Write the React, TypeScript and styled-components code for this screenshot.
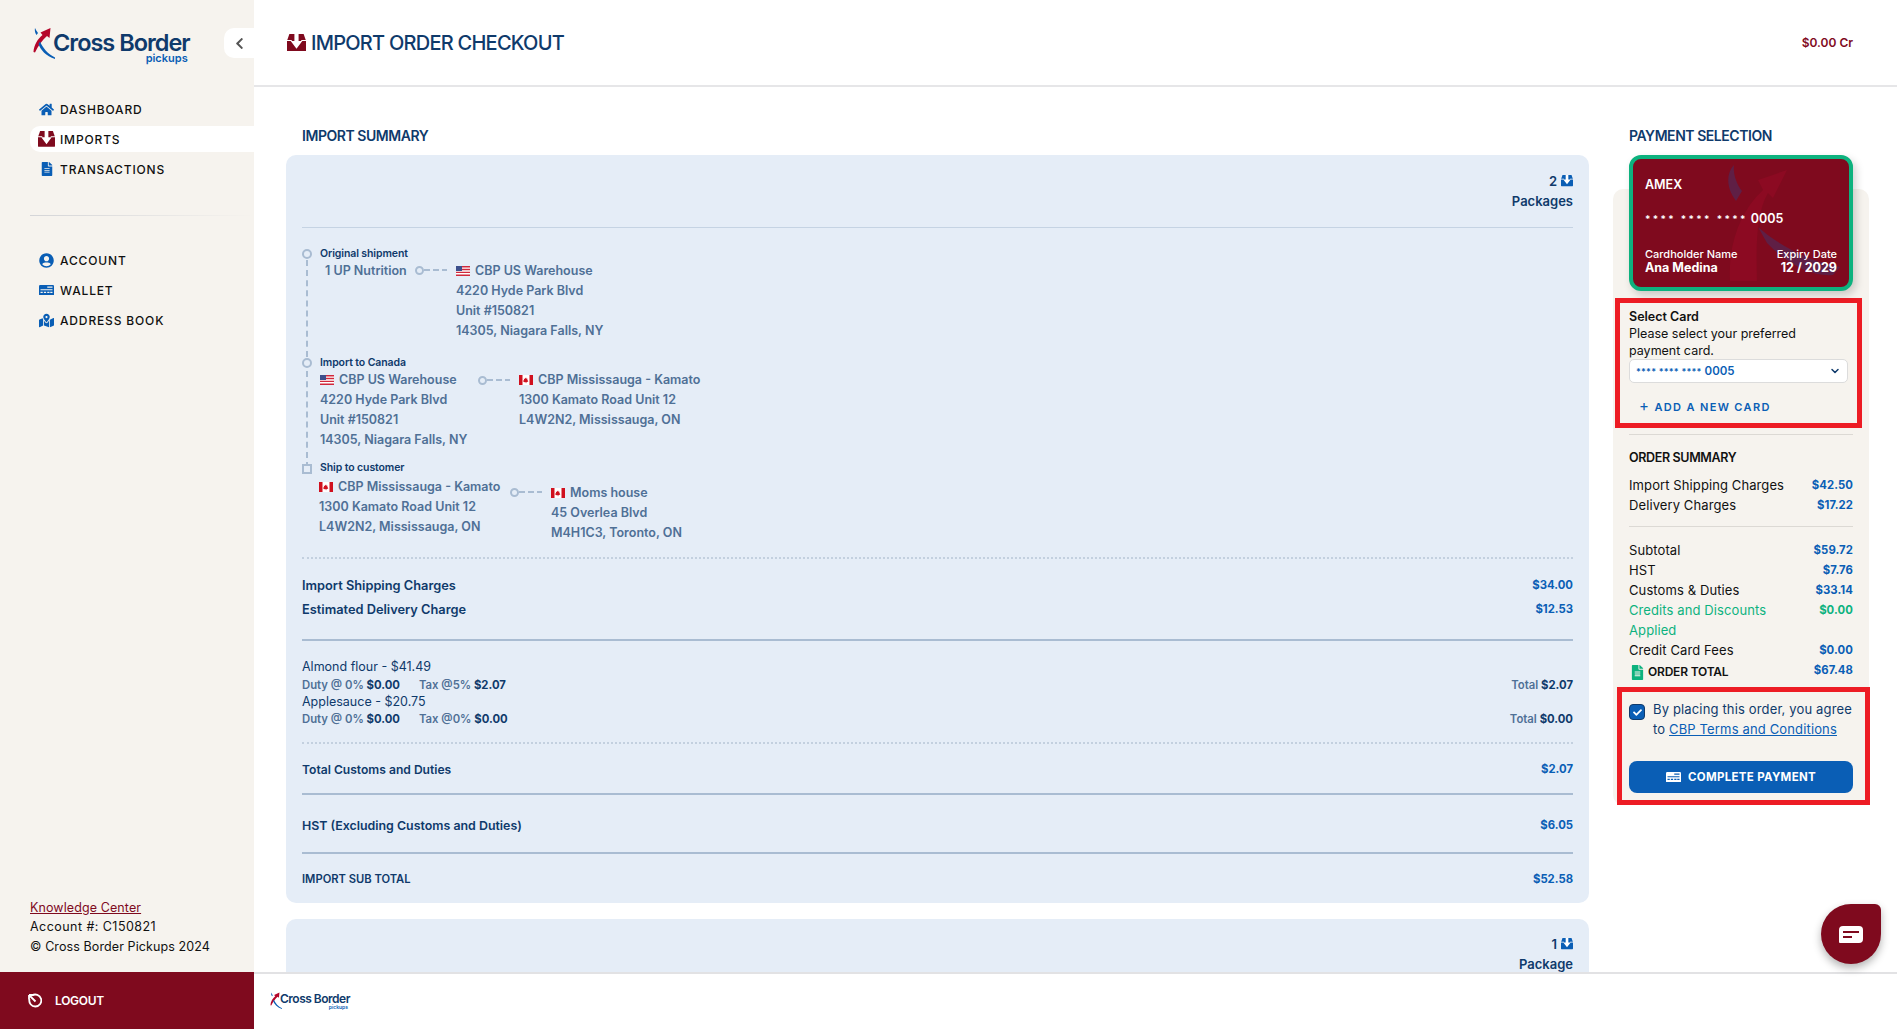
import React, {FC} from 'react';
import styled, {createGlobalStyle} from 'styled-components';
import {FaHome, FaFileAlt, FaUserCircle, FaMapMarkedAlt, FaChevronLeft, FaCheck} from 'react-icons/fa';
import {LuChevronDown} from 'react-icons/lu';

const navy = '#0f3a6b';
const steel = '#4f7096';
const blue = '#0a5eb5';
const maroon = '#7f0a1e';
const beige = '#f6f3ee';
const sky = '#e5edf7';
const rule = '#a9bcd2';
const green = '#0db27e';

const GlobalStyle = createGlobalStyle`
  html, body {
    margin: 0;
    height: 100%;
    overflow: hidden;
    background: #fff;
    font-family: Inter, "Open Sans", sans-serif;
  }
  * { box-sizing: border-box; }
`;

const Page = styled.div`
  display: grid;
  grid-template-columns: 254px 1fr;
  grid-template-rows: 1fr 57px;
  height: 1029px;
  width: 1897px;
  position: relative;
  overflow: hidden;
`;

const Sidebar = styled.aside`
  background: ${beige};
  display: flex;
  flex-direction: column;
  min-height: 0;
`;

const SideTop = styled.div`
  display: flex;
  justify-content: space-between;
  align-items: flex-start;
  padding: 27px 0 0 33px;
  height: 94px;
`;

const CollapseButton = styled.div`
  width: 30px;
  height: 30px;
  margin-top: 1px;
  background: #fff;
  border-radius: 10px 0 0 10px;
  display: flex;
  align-items: center;
  justify-content: center;
  color: #555;
  font-size: 13px;
`;

const LogoWrap = styled.div<{$small?: boolean}>`
  display: flex;
  align-items: flex-start;
  width: ${p => (p.$small ? '82px' : '158px')};
  height: ${p => (p.$small ? '18px' : '34px')};
`;

const LogoMark = styled.svg<{$small?: boolean}>`
  width: ${p => (p.$small ? '12px' : '22px')};
  height: ${p => (p.$small ? '17px' : '32px')};
  flex: none;
`;

const LogoText = styled.div<{$small?: boolean}>`
  display: flex;
  flex-direction: column;
  align-items: flex-end;
  margin-left: -2px;
  font-size: ${p => (p.$small ? '12px' : '23.5px')};
  line-height: ${p => (p.$small ? '13px' : '25px')};
  margin-top: ${p => (p.$small ? '0' : '3px')};
  font-weight: 600;
  letter-spacing: ${p => (p.$small ? '-0.5px' : '-1px')};
  color: ${navy};
  white-space: nowrap;
`;

const LogoSub = styled.span<{$small?: boolean}>`
  font-size: ${p => (p.$small ? '5px' : '11px')};
  line-height: ${p => (p.$small ? '4px' : '7px')};
  letter-spacing: 0;
  color: ${blue};
  margin-right: 2px;
  font-weight: 600;
`;

const NavList = styled.nav`
  display: flex;
  flex-direction: column;
`;

const NavItem = styled.div<{$active?: boolean}>`
  display: flex;
  align-items: center;
  height: 26px;
  margin: 2px 0 2px 30px;
  padding-left: 9px;
  gap: 6px;
  background: ${p => (p.$active ? '#fff' : 'transparent')};
  border-radius: 10px 0 0 10px;
  font-size: 12px;
  font-weight: 500;
  letter-spacing: 0.85px;
  color: #111;

  svg {
    flex: none;
    color: ${blue};
  }
`;

const NavIconBox = styled.span`
  width: 15px;
  display: flex;
  justify-content: center;
`;

const Divider = styled.div`
  height: 1px;
  margin: 31px 0 29px 30px;
  background: linear-gradient(90deg, #d4d5d8, ${beige});
`;

const SideFooter = styled.div`
  margin-top: auto;
  padding: 0 0 15px 30px;
  font-size: 12.5px;
  line-height: 20px;
  color: #111;
  letter-spacing: 0.1px;
`;

const KnowledgeLink = styled.a`
  display: block;
  color: ${maroon};
  text-decoration: underline;
  line-height: 19px;
`;

const AccountLine = styled.div`
  letter-spacing: 0.45px;
`;

const Main = styled.main`
  display: flex;
  flex-direction: column;
  min-height: 0;
  overflow: hidden;
`;

const Header = styled.header`
  flex: none;
  height: 87px;
  border-bottom: 2px solid #e6e6e8;
  display: flex;
  align-items: center;
  justify-content: space-between;
  padding: 0 44px 0 33px;
`;

const Title = styled.h1`
  margin: 0;
  display: flex;
  align-items: center;
  gap: 5px;
  font-size: 20px;
  font-weight: 500;
  letter-spacing: -0.75px;
  color: ${navy};
`;

const Credit = styled.div`
  font-size: 12px;
  font-weight: 600;
  color: ${maroon};
`;

const Content = styled.div`
  flex: 1;
  min-height: 0;
  overflow: hidden;
  display: grid;
  grid-template-columns: 1303px 256px;
  column-gap: 24px;
  padding: 0 0 0 32px;
  align-items: start;
`;

const LeftColumn = styled.section`
  display: flex;
  flex-direction: column;
  gap: 16px;
`;

const SectionTitle = styled.h2<{$inset: number}>`
  margin: 0;
  height: 68px;
  padding: 40px 0 0 ${p => p.$inset}px;
  font-size: 14px;
  line-height: 18px;
  font-weight: 600;
  color: ${navy};
  letter-spacing: -0.45px;
`;

const Panel = styled.div`
  background: ${sky};
  border-radius: 10px;
  padding: 15px 16px 14px;
  margin-top: -16px;

  &:first-of-type {
    padding-top: 16px;
  }

  & + & {
    margin-top: 0;
  }
`;

const PackageHead = styled.div`
  display: flex;
  flex-direction: column;
  align-items: flex-end;
  font-size: 13px;
  line-height: 20px;
  font-weight: 600;
  color: ${navy};
  padding-bottom: 16px;
  border-bottom: 1px solid #c5d3e3;
`;

const PackageCount = styled.div`
  display: flex;
  align-items: center;
  gap: 4px;
`;

const Route = styled.div`
  position: relative;
  padding: 19px 0 0 18px;

  &::before {
    content: '';
    position: absolute;
    left: 4px;
    top: 32px;
    height: 208px;
    border-left: 2px dashed ${rule};
  }
`;

const Stage = styled.div<{$gap: number}>`
  position: relative;
  margin-top: ${p => p.$gap}px;
`;

const StageLabel = styled.div`
  font-size: 10.5px;
  line-height: 14px;
  font-weight: 600;
  color: ${navy};
  letter-spacing: -0.1px;
`;

const StageMark = styled.span<{$square?: boolean}>`
  position: absolute;
  left: -18px;
  top: ${p => (p.$square ? '3px' : '2px')};
  width: 10px;
  height: 10px;
  border: 2px solid ${rule};
  border-radius: ${p => (p.$square ? '0' : '50%')};
  background: ${sky};
`;

const StageRow = styled.div`
  display: flex;
  align-items: flex-start;
`;

const Address = styled.div<{$width?: number; $shift?: number; $top?: number}>`
  flex: none;
  width: ${p => (p.$width ? `${p.$width}px` : 'auto')};
  margin-left: ${p => p.$shift || 0}px;
  padding-top: ${p => p.$top || 0}px;
  font-size: 12.5px;
  line-height: 20px;
  font-weight: 600;
  color: ${steel};
  white-space: nowrap;
`;

const AddressName = styled.div`
  display: flex;
  align-items: center;
  gap: 5px;
`;

const Connector = styled.div<{$top: number}>`
  flex: none;
  width: 41px;
  height: 8px;
  margin-top: ${p => p.$top}px;
  display: flex;
  align-items: center;
`;

const ConnectorDot = styled.span`
  width: 9px;
  height: 9px;
  border: 2px solid ${rule};
  border-radius: 50%;
`;

const ConnectorDash = styled.span`
  width: 23px;
  height: 2px;
  background: repeating-linear-gradient(90deg, ${rule} 0 6px, transparent 6px 9px);
`;

const DottedRule = styled.div<{$top: number}>`
  margin-top: ${p => p.$top}px;
  border-top: 2px dotted #c3d0df;
`;

const SolidRule = styled.div<{$top: number}>`
  margin-top: ${p => p.$top}px;
  height: 2px;
  background: ${rule};
`;

const ChargeRow = styled.div<{$top: number; $size?: number}>`
  display: flex;
  justify-content: space-between;
  align-items: center;
  height: 20px;
  margin-top: ${p => p.$top}px;
  font-size: ${p => p.$size || 12.8}px;
  font-weight: 600;
  color: ${navy};
`;

const Amount = styled.span`
  font-size: 11.3px;
  font-weight: 700;
  color: ${blue};
`;

const ItemLine = styled.div<{$top?: number}>`
  display: flex;
  justify-content: space-between;
  align-items: center;
  height: 17px;
  margin-top: ${p => p.$top || 0}px;
  font-size: 12.5px;
  color: ${navy};
`;

const ItemFigures = styled.div`
  display: flex;
  gap: 19px;
  font-size: 11.3px;
  font-weight: 600;
  color: ${steel};

  b {
    font-weight: 700;
    color: ${navy};
  }
`;

const RightColumn = styled.section`
  display: flex;
  flex-direction: column;
`;

const CheckoutPanel = styled.div`
  position: relative;
  margin-top: 34px;
  padding: 0 16px 0;
  height: 616px;
  background: ${beige};
  border-radius: 10px;
`;

const CardFace = styled.div`
  position: relative;
  overflow: hidden;
  width: 224px;
  height: 136px;
  margin-top: -34px;
  padding: 17px 12px 0;
  border: 4px solid ${green};
  border-radius: 12px;
  background: ${maroon};
  color: #fff;
  box-shadow: 3px 4px 8px rgba(0, 0, 0, 0.18);
`;

const CardWatermark = styled.svg`
  position: absolute;
  left: 93px;
  top: 4px;
  width: 114px;
  height: 122px;
`;

const CardName = styled.div`
  position: relative;
  font-size: 12.5px;
  line-height: 17px;
  font-weight: 600;
`;

const CardNumber = styled.div`
  position: relative;
  margin-top: 18px;
  font-size: 12.5px;
  line-height: 16px;
  font-weight: 600;
  display: flex;
  gap: 3px;
`;

const CardStars = styled.span`
  letter-spacing: 2.35px;
  font-size: 10px;
`;

const CardBottom = styled.div`
  position: relative;
  margin-top: 21px;
  display: flex;
  justify-content: space-between;
  font-size: 11px;
  line-height: 13px;
  font-weight: 500;

  b {
    display: block;
    font-size: 12.5px;
    font-weight: 700;
  }
`;

const CardExpiry = styled.div`
  text-align: right;
`;

const RedBox = styled.div<{$left: number; $right: number; $top: number; $height: number; $pad: string}>`
  border: 5px solid #ed1c24;
  height: ${p => p.$height}px;
  margin: ${p => p.$top}px ${p => p.$right}px 0 ${p => p.$left}px;
  padding: ${p => p.$pad};
`;

const SelectHeading = styled.div`
  font-size: 12.5px;
  line-height: 17px;
  font-weight: 600;
  color: #111;
`;

const SelectHint = styled.div`
  max-width: 180px;
  font-size: 12.5px;
  line-height: 17px;
  color: #111;
`;

const CardSelect = styled.div`
  height: 24px;
  padding: 0 6px;
  background: #fff;
  border: 1px solid #dcdcdc;
  border-radius: 5px;
  display: flex;
  align-items: center;
  justify-content: space-between;
  font-size: 11.5px;
  font-weight: 600;
  color: ${blue};
`;

const SelectStars = styled.span`
  font-size: 9px;
  letter-spacing: 0.2px;
  margin-right: 3px;
`;

const AddCard = styled.div`
  margin-top: 13px;
  padding-left: 10px;
  font-size: 11px;
  line-height: 20px;
  font-weight: 600;
  letter-spacing: 1.35px;
  color: ${blue};
  white-space: nowrap;

  span {
    font-size: 15px;
    font-weight: 400;
  }
`;

const SoftRule = styled.div<{$top: number; $bottom?: number}>`
  height: 1px;
  margin: ${p => p.$top}px 0 ${p => p.$bottom || 0}px;
  background: #dcd9d4;
`;

const SummaryTitle = styled.div`
  margin-top: 15px;
  font-size: 12.5px;
  line-height: 16px;
  font-weight: 600;
  color: #111;
  margin-bottom: 9px;
  letter-spacing: -0.35px;
`;

const SummaryRow = styled.div<{$green?: boolean}>`
  display: flex;
  justify-content: space-between;
  align-items: flex-start;
  font-size: 13px;
  line-height: 20px;
  letter-spacing: 0.1px;
  color: ${p => (p.$green ? green : '#111')};

  span:first-child {
    max-width: 165px;
  }
`;

const SummaryAmount = styled.span<{$green?: boolean}>`
  font-size: 11.3px;
  font-weight: 700;
  color: ${p => (p.$green ? green : blue)};
`;

const TotalLabel = styled.span`
  display: flex;
  align-items: center;
  gap: 3px;
  margin: 2px 0 0 1px;
  font-weight: 600;
  font-size: 12px;
  letter-spacing: -0.2px;
  color: #111;

  svg {
    color: ${green};
  }
`;

const AgreeRow = styled.div`
  display: flex;
  gap: 8px;
  font-size: 13px;
  line-height: 20px;
  letter-spacing: 0.15px;
  color: ${navy};
`;

const CheckBox = styled.div`
  flex: none;
  width: 16px;
  height: 16px;
  margin-top: 5px;
  background: ${blue};
  border: 1px solid ${navy};
  border-radius: 4px;
  display: flex;
  align-items: center;
  justify-content: center;
  color: #fff;
  font-size: 9px;
`;

const TermsLink = styled.a`
  color: ${blue};
  text-decoration: underline;
`;

const PayButton = styled.button`
  width: 224px;
  height: 32px;
  margin-top: 22px;
  border: 0;
  border-radius: 8px;
  background: ${blue};
  color: #fff;
  display: flex;
  align-items: center;
  justify-content: center;
  gap: 7px;
  font-family: inherit;
  font-size: 11.5px;
  font-weight: 700;
  letter-spacing: 0.3px;
`;

const BottomBar = styled.footer`
  grid-column: 1 / -1;
  display: grid;
  grid-template-columns: 254px 1fr;
  background: #fff;
`;

const LogoutCell = styled.div`
  background: ${maroon};
  color: #fff;
  display: flex;
  align-items: center;
  gap: 13px;
  padding: 0 0 1px 27px;
  font-size: 12px;
  font-weight: 600;
  letter-spacing: -0.3px;
`;

const BottomLogoCell = styled.div`
  border-top: 2px solid #e2e2e4;
  padding: 18px 0 0 16px;
`;

const ChatButton = styled.div`
  position: absolute;
  right: 16px;
  top: 904px;
  width: 60px;
  height: 60px;
  border-radius: 50% 6px 50% 50%;
  background: ${maroon};
  box-shadow: 0 4px 8px rgba(0, 0, 0, 0.3);
  display: flex;
  align-items: center;
  justify-content: center;
`;

const ImportIcon: FC<{color: string; size: number}> = ({color, size}) => (
  <svg width={size} height={size * 0.93} viewBox="0 0 20 18.6">
    <path fill={color} d="M2.500 0H17.500L20 7v10.600a1 1 0 0 1-1 1H1a1 1 0 0 1-1-1V7z" />
    <path fill="#fff" d="M7.800 0h4.400v7.500h3.900L10 15.500 3.900 7.500h3.900z" />
    <path fill="#fff" d="M0 6.200h5v1.300H0zM15 6.200h5v1.300h-5z" />
  </svg>
);

const CardIcon: FC<{color: string; cut: string; w: number}> = ({color, cut, w}) => (
  <svg width={w} height={w * 0.7} viewBox="0 0 20 14">
    <rect width="20" height="14" rx="1.5" fill={color} />
    <path fill={cut} d="M11 2h7v1.600h-7zM2 5.600h16v1.400H2zM2 9h3v1.600H2zM6.500 9h3v1.600h-3zM11 9h3v1.600h-3zM15 9h3v1.600h-3z" />
  </svg>
);

const Flag: FC<{country: 'us' | 'ca'}> = ({country}) =>
  country === 'us' ? (
    <svg width="14" height="10" viewBox="0 0 14 10">
      <rect width="14" height="10" fill="#fff" />
      <path fill="#d0283c" d="M0 0h14v1.400H0zM0 2.800h14v1.400H0zM0 5.700h14v1.400H0zM0 8.600h14V10H0z" />
      <rect width="6" height="5" fill="#3c4f8c" />
    </svg>
  ) : (
    <svg width="14" height="10" viewBox="0 0 14 10">
      <rect width="14" height="10" fill="#fff" />
      <path fill="#d0101e" d="M0 0h3.500v10H0zM10.500 0H14v10h-3.500z" />
      <path fill="#d0101e" d="M7 2.400l.8 1.500.8-.3-.3 1.800.9-.3-.2.8.6.4-1.800 1H7.200v1h-.4v-1H5.400l-1.800-1 .6-.4-.2-.8.9.3-.3-1.800.8.3z" transform="translate(0.6 0) scale(0.92 1)" />
    </svg>
  );

const Logo: FC<{small?: boolean}> = ({small}) => (
  <LogoWrap $small={small}>
    <LogoMark $small={small} viewBox="0 0 22 32">
      <path fill="#b5062a" d="M.5 25c.3-7 4.500-13.500 9-17l-2-2.500L17.500 1l-1 10-2.500-2C9.500 13 5 19 2 25.500z" />
      <path fill="#0a5eb5" d="M2 1c-.5 2.500 0 5 1.500 7l1.500-2C3.700 4.500 2.800 2.800 2 1zM7 14.500c3 7 8.500 13 16 16.500l-1 1C13 29 7.500 23 5.500 17z" />
    </LogoMark>
    <LogoText $small={small}>
      Cross Border
      <LogoSub $small={small}>pickups</LogoSub>
    </LogoText>
  </LogoWrap>
);

const App: FC = () => (
  <Page>
    <GlobalStyle />
    <Sidebar>
      <SideTop>
        <Logo />
        <CollapseButton><FaChevronLeft /></CollapseButton>
      </SideTop>
      <NavList>
        <NavItem><NavIconBox><FaHome size={15} /></NavIconBox>DASHBOARD</NavItem>
        <NavItem $active><NavIconBox><ImportIcon color={maroon} size={17} /></NavIconBox>IMPORTS</NavItem>
        <NavItem><NavIconBox><FaFileAlt size={14} /></NavIconBox>TRANSACTIONS</NavItem>
      </NavList>
      <Divider />
      <NavList>
        <NavItem><NavIconBox><FaUserCircle size={15} /></NavIconBox>ACCOUNT</NavItem>
        <NavItem><NavIconBox><CardIcon color={blue} cut={beige} w={15} /></NavIconBox>WALLET</NavItem>
        <NavItem><NavIconBox><FaMapMarkedAlt size={15} /></NavIconBox>ADDRESS BOOK</NavItem>
      </NavList>
      <SideFooter>
        <KnowledgeLink>Knowledge Center</KnowledgeLink>
        <AccountLine>Account #: C150821</AccountLine>
        <div>© Cross Border Pickups 2024</div>
      </SideFooter>
    </Sidebar>

    <Main>
      <Header>
        <Title><ImportIcon color={maroon} size={19} />IMPORT ORDER CHECKOUT</Title>
        <Credit>$0.00 Cr</Credit>
      </Header>
      <Content>
        <LeftColumn>
          <SectionTitle $inset={16}>IMPORT SUMMARY</SectionTitle>
          <Panel>
            <PackageHead>
              <PackageCount>2 <ImportIcon color={blue} size={12} /></PackageCount>
              <div>Packages</div>
            </PackageHead>
            <Route>
              <Stage $gap={0}>
                <StageMark />
                <StageLabel>Original shipment</StageLabel>
                <StageRow>
                  <Address $width={90} $shift={5}>1 UP Nutrition</Address>
                  <Connector $top={5}><ConnectorDot /><ConnectorDash /></Connector>
                  <Address>
                    <AddressName><Flag country="us" />CBP US Warehouse</AddressName>
                    <div>4220 Hyde Park Blvd</div>
                    <div>Unit #150821</div>
                    <div>14305, Niagara Falls, NY</div>
                  </Address>
                </StageRow>
              </Stage>
              <Stage $gap={15}>
                <StageMark />
                <StageLabel>Import to Canada</StageLabel>
                <StageRow>
                  <Address $width={158}>
                    <AddressName><Flag country="us" />CBP US Warehouse</AddressName>
                    <div>4220 Hyde Park Blvd</div>
                    <div>Unit #150821</div>
                    <div>14305, Niagara Falls, NY</div>
                  </Address>
                  <Connector $top={6}><ConnectorDot /><ConnectorDash /></Connector>
                  <Address>
                    <AddressName><Flag country="ca" />CBP Mississauga - Kamato</AddressName>
                    <div>1300 Kamato Road Unit 12</div>
                    <div>L4W2N2, Mississauga, ON</div>
                  </Address>
                </StageRow>
              </Stage>
              <Stage $gap={11}>
                <StageMark $square />
                <StageLabel>Ship to customer</StageLabel>
                <StageRow>
                  <Address $width={191} $shift={-1} $top={2}>
                    <AddressName><Flag country="ca" />CBP Mississauga - Kamato</AddressName>
                    <div>1300 Kamato Road Unit 12</div>
                    <div>L4W2N2, Mississauga, ON</div>
                  </Address>
                  <Connector $top={13}><ConnectorDot /><ConnectorDash /></Connector>
                  <Address $top={8}>
                    <AddressName><Flag country="ca" />Moms house</AddressName>
                    <div>45 Overlea Blvd</div>
                    <div>M4H1C3, Toronto, ON</div>
                  </Address>
                </StageRow>
              </Stage>
            </Route>
            <DottedRule $top={14} />
            <ChargeRow $top={16}>Import Shipping Charges<Amount>$34.00</Amount></ChargeRow>
            <ChargeRow $top={4}>Estimated Delivery Charge<Amount>$12.53</Amount></ChargeRow>
            <SolidRule $top={20} />
            <ItemLine $top={17}>Almond flour - $41.49</ItemLine>
            <ItemLine $top={1}>
              <ItemFigures><span>Duty @ 0% <b>$0.00</b></span><span>Tax @5% <b>$2.07</b></span></ItemFigures>
              <ItemFigures><span>Total <b>$2.07</b></span></ItemFigures>
            </ItemLine>
            <ItemLine>Applesauce - $20.75</ItemLine>
            <ItemLine>
              <ItemFigures><span>Duty @ 0% <b>$0.00</b></span><span>Tax @0% <b>$0.00</b></span></ItemFigures>
              <ItemFigures><span>Total <b>$0.00</b></span></ItemFigures>
            </ItemLine>
            <DottedRule $top={15} />
            <ChargeRow $top={15} $size={12.1}>Total Customs and Duties<Amount>$2.07</Amount></ChargeRow>
            <SolidRule $top={14} />
            <ChargeRow $top={20} $size={12.4}>HST (Excluding Customs and Duties)<Amount>$6.05</Amount></ChargeRow>
            <SolidRule $top={17} />
            <ChargeRow $top={15} $size={11.2}>IMPORT SUB TOTAL<Amount>$52.58</Amount></ChargeRow>
          </Panel>
          <Panel>
            <PackageHead>
              <PackageCount>1 <ImportIcon color={blue} size={12} /></PackageCount>
              <div>Package</div>
            </PackageHead>
          </Panel>
        </LeftColumn>

        <RightColumn>
          <SectionTitle $inset={16}>PAYMENT SELECTION</SectionTitle>
          <CheckoutPanel>
            <CardFace>
              <CardWatermark viewBox="0 0 114 122">
                <path fill="#5f1f45" d="M8 2C0 10 0 25 10 38L16 28C10 20 7 10 8 2zM32 64C50 80 80 98 114 104L107 112C85 114 60 100 41 80z" />
                <path fill="#8c0a22" d="M4 118C2 85 12 50 37 27L32 17 61 7 47 35 42 30C30 50 30 85 31 118z" />
              </CardWatermark>
              <CardName>AMEX</CardName>
              <CardNumber><CardStars>**** **** ****</CardStars>0005</CardNumber>
              <CardBottom>
                <div>Cardholder Name<b>Ana Medina</b></div>
                <CardExpiry>Expiry Date<b>12 / 2029</b></CardExpiry>
              </CardBottom>
            </CardFace>
            <RedBox $left={-14} $right={-9} $top={7} $height={130} $pad="5px 9px 0 9px">
              <SelectHeading>Select Card</SelectHeading>
              <SelectHint>Please select your preferred payment card.</SelectHint>
              <CardSelect>
                <span><SelectStars>**** **** ****</SelectStars>0005</span>
                <LuChevronDown size={12} color={navy} strokeWidth={3} />
              </CardSelect>
              <AddCard><span>+</span> ADD A NEW CARD</AddCard>
            </RedBox>
            <SoftRule $top={6} />
            <SummaryTitle>ORDER SUMMARY</SummaryTitle>
            <SummaryRow><span>Import Shipping Charges</span><SummaryAmount>$42.50</SummaryAmount></SummaryRow>
            <SummaryRow><span>Delivery Charges</span><SummaryAmount>$17.22</SummaryAmount></SummaryRow>
            <SoftRule $top={11} $bottom={13} />
            <SummaryRow><span>Subtotal</span><SummaryAmount>$59.72</SummaryAmount></SummaryRow>
            <SummaryRow><span>HST</span><SummaryAmount>$7.76</SummaryAmount></SummaryRow>
            <SummaryRow><span>Customs &amp; Duties</span><SummaryAmount>$33.14</SummaryAmount></SummaryRow>
            <SummaryRow $green><span>Credits and Discounts Applied</span><SummaryAmount $green>$0.00</SummaryAmount></SummaryRow>
            <SummaryRow><span>Credit Card Fees</span><SummaryAmount>$0.00</SummaryAmount></SummaryRow>
            <SummaryRow>
              <TotalLabel><FaFileAlt size={15} />ORDER TOTAL</TotalLabel>
              <SummaryAmount>$67.48</SummaryAmount>
            </SummaryRow>
            <RedBox $left={-12} $right={-17} $top={5} $height={118} $pad="7px 12px 0 7px">
              <AgreeRow>
                <CheckBox><FaCheck /></CheckBox>
                <div>
                  <div>By placing this order, you agree</div>
                  <div>to <TermsLink>CBP Terms and Conditions</TermsLink></div>
                </div>
              </AgreeRow>
              <PayButton><CardIcon color="#fff" cut={blue} w={15} />COMPLETE PAYMENT</PayButton>
            </RedBox>
          </CheckoutPanel>
        </RightColumn>
      </Content>
    </Main>

    <BottomBar>
      <LogoutCell>
        <svg width="15" height="15" viewBox="0 0 15 15" fill="none" stroke="#fff" strokeWidth="1.8">
          <path d="M5 2.500A6 6 0 1 1 2.500 6" />
          <path d="M8.500 8.500L2 2M2 2h4.500M2 2v4.500" />
        </svg>
        LOGOUT
      </LogoutCell>
      <BottomLogoCell><Logo small /></BottomLogoCell>
    </BottomBar>

    <ChatButton>
      <svg width="24" height="17" viewBox="0 0 24 17">
        <path fill="#fff" d="M4 0h16a4 4 0 0 1 4 4v9a4 4 0 0 1-4 4H1a1 1 0 0 1-1-1V4a4 4 0 0 1 4-4z" />
        <path fill={maroon} d="M4 5h16v2H4zM4 10h9v2H4z" />
      </svg>
    </ChatButton>
  </Page>
);

export default App;
